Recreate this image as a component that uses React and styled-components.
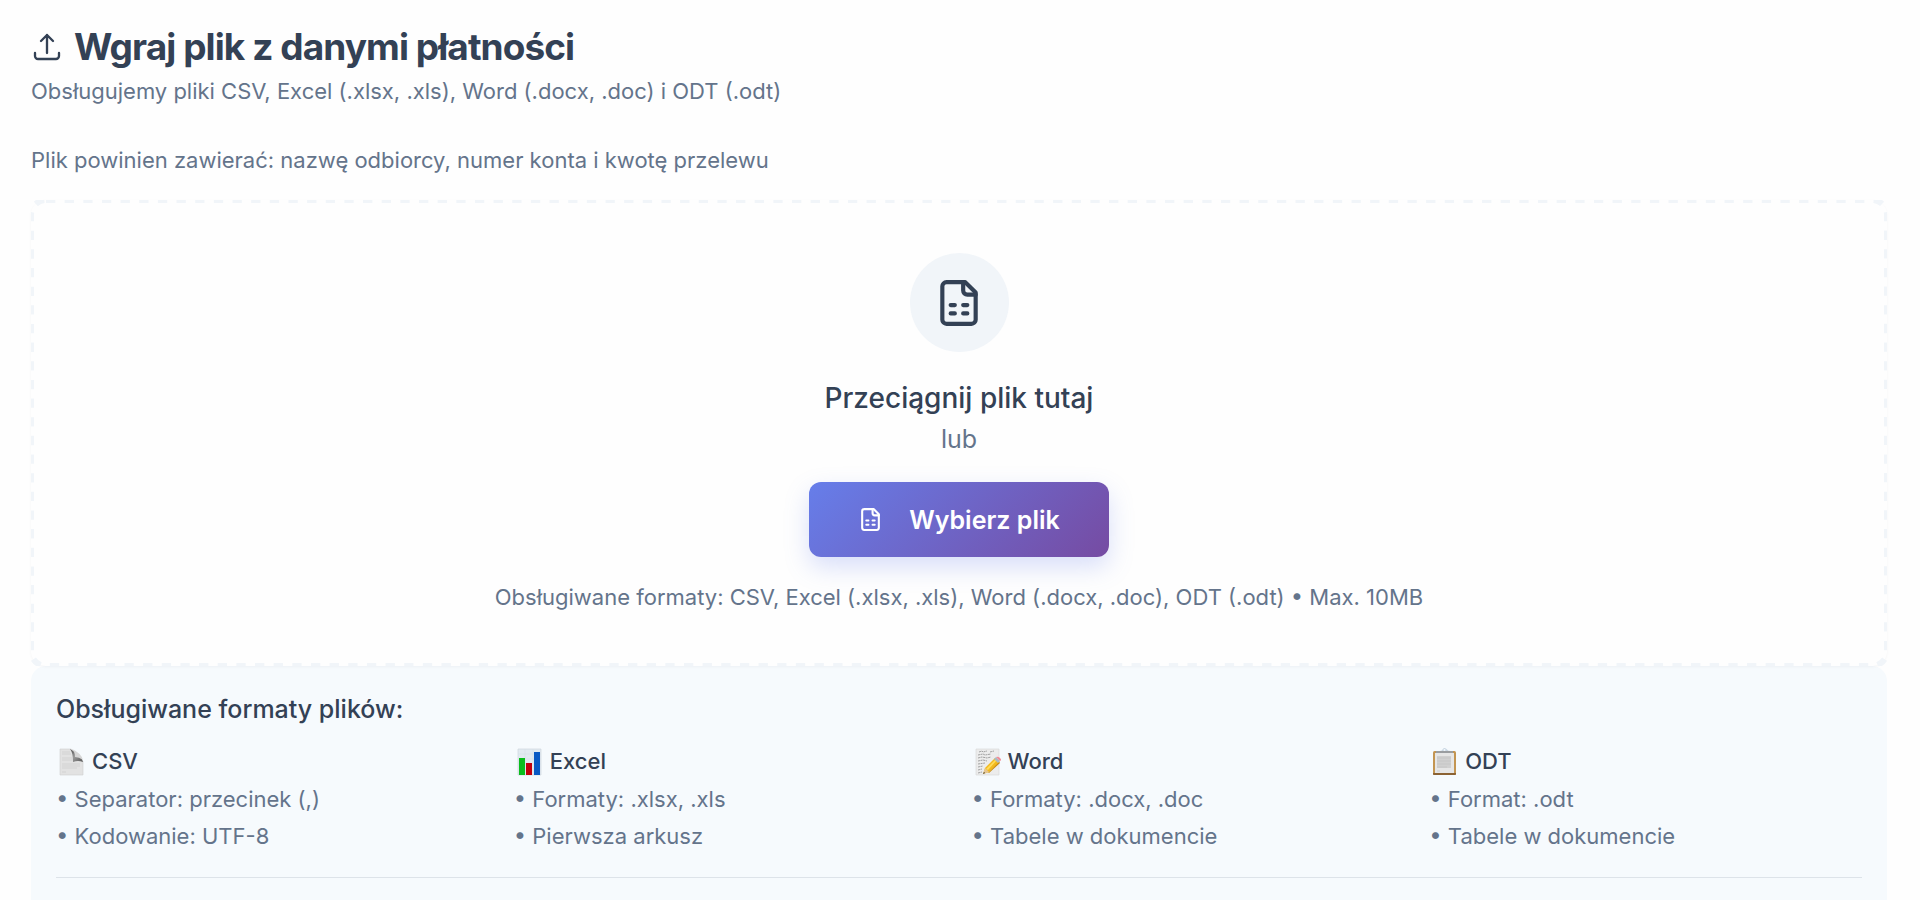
import { useRef } from 'react';
import styled, { createGlobalStyle } from 'styled-components';

const GlobalStyle = createGlobalStyle`
  * {
    box-sizing: border-box;
  }

  body {
    margin: 0;
    background: #fefefe;
    color: #334155;
    font-family: Inter, "Liberation Sans", sans-serif;
    font-size: 22px;
    line-height: 37px;
    overflow-y: hidden;
  }

  h1, h2, h3, p, ul {
    margin: 0;
  }
`;

const Page = styled.main`
  height: 100vh;
  padding: 25px 33px 0 31px;
  overflow: hidden;
`;

const Header = styled.header`
  display: flex;
  flex-direction: column;
  margin-bottom: 21px;
`;

const Title = styled.h1`
  display: flex;
  align-items: center;
  gap: 11px;
  font-size: 37px;
  font-weight: 700;
  line-height: 44px;
  letter-spacing: -0.025em;
`;

const Description = styled.p`
  margin-top: ${p => p.$spaced ? '32px' : '4px'};
  color: #64748b;
`;

const DropZone = styled.section`
  position: relative;
  display: flex;
  flex-direction: column;
  align-items: center;
  padding: 53px 24px 50px;
  border-radius: 15px;
  box-shadow: 0 1px 3px rgba(15, 23, 42, 0.04);
  text-align: center;
`;

const DashedOutline = styled.svg`
  position: absolute;
  inset: 0;
  width: 100%;
  height: 100%;
  pointer-events: none;

  rect {
    fill: none;
    stroke: #f1f5f9;
    stroke-width: 6;
    stroke-dasharray: 9.3 9.35;
  }
`;

const IconCircle = styled.div`
  display: flex;
  align-items: center;
  justify-content: center;
  width: 99px;
  height: 99px;
  margin-bottom: 26px;
  border-radius: 50%;
  background: #f1f5f9;
`;

const DropTitle = styled.h2`
  font-size: 28px;
  font-weight: 500;
  line-height: 40px;
`;

const DropOr = styled.p`
  margin-bottom: 22px;
  color: #64748b;
  font-size: 25px;
  line-height: 42px;
`;

const ChooseButton = styled.button`
  display: inline-flex;
  align-items: center;
  gap: 26px;
  height: 75px;
  padding: 0 49px;
  border: 0;
  border-radius: 12px;
  background: linear-gradient(135deg, #667eea 0%, #764ba2 100%);
  box-shadow: 0 10px 25px rgba(102, 126, 234, 0.25);
  color: #fff;
  font-family: inherit;
  font-size: 25px;
  font-weight: 600;
  cursor: pointer;
`;

const DropHint = styled.p`
  margin-top: 22px;
  color: #64748b;
`;

const Formats = styled.section`
  min-height: 260px;
  padding: 25px;
  border-radius: 15px;
  background: #f6fafd;
`;

const FormatsTitle = styled.h3`
  margin-bottom: 15px;
  font-size: 25px;
  font-weight: 500;
`;

const FormatsGrid = styled.div`
  display: grid;
  grid-template-columns: repeat(4, 1fr);
  gap: 25px;
  padding-bottom: 22px;
  border-bottom: 1px solid #dde3e9;
`;

const FormatName = styled.p`
  display: flex;
  align-items: center;
  gap: 6px;
  margin-bottom: 1px;
  font-weight: 500;
`;

const FormatList = styled.ul`
  padding: 0;
  list-style: none;
  color: #64748b;

  li::before {
    content: '• ';
  }
`;

const UploadIcon = () => (
  <svg width="32" height="32" viewBox="0 0 24 24" fill="none" stroke="currentColor" strokeWidth="1.75" strokeLinecap="round" strokeLinejoin="round" aria-hidden="true">
    <path d="M3 16.5v2.25A2.25 2.25 0 0 0 5.25 21h13.5A2.25 2.25 0 0 0 21 18.75V16.5m-13.5-9L12 3m0 0 4.5 4.5M12 3v13.5" />
  </svg>
);

const SheetIcon = ({ size }) => (
  <svg width={size} height={size} viewBox="0 0 24 24" fill="none" stroke="currentColor" strokeWidth="2" strokeLinecap="round" strokeLinejoin="round" aria-hidden="true">
    <path d="M15 2H6a2 2 0 0 0-2 2v16a2 2 0 0 0 2 2h12a2 2 0 0 0 2-2V7Z" />
    <path d="M14 2v4a2 2 0 0 0 2 2h4" />
    <path d="M8 13h2M14 13h2M8 17h2M14 17h2" />
  </svg>
);

const PageEmoji = () => (
  <svg width="30" height="30" viewBox="0 0 30 30" aria-hidden="true">
    <defs>
      <linearGradient id="curl" x1="0" y1="0" x2="1" y2="1">
        <stop offset="0" stopColor="#444" />
        <stop offset="0.45" stopColor="#999" />
        <stop offset="0.6" stopColor="#888" />
        <stop offset="1" stopColor="#555" />
      </linearGradient>
    </defs>
    <path d="M4 2h11q4 2 5 6t7 6v14H4z" fill="#e2e2e2" stroke="#d0d0d0" strokeWidth="0.6" />
    <path d="M14 2q3 3 3 13 5-2 10 0-1-6-13-13z" fill="url(#curl)" />
    <path d="M16 2q9 4 11 11-4-3-8-3 0-5-3-8z" fill="#d6d6d6" />
    <path d="M6 5h8M6 7h9M6 11h10M6 13h10M6 17h18M6 19h18M6 21h15M6 25h4" stroke="#cbcbcb" strokeWidth="0.7" />
  </svg>
);

const ChartEmoji = () => (
  <svg width="30" height="30" viewBox="0 0 30 30" aria-hidden="true">
    <path d="M4 2h23v26H4z" fill="#e2eaf1" stroke="#ced6dc" strokeWidth="0.7" />
    <path d="M4 7h23M4 12h23M4 17h23M11 2v26M19 2v26" stroke="#d3dde7" strokeWidth="0.5" />
    <path d="M5 11h6v17H5z" fill="#0bbd1d" />
    <path d="M12 16h6v12h-6z" fill="#c3000d" />
    <path d="M20 5h6v23h-6z" fill="#0959c4" />
  </svg>
);

const MemoEmoji = () => (
  <svg width="30" height="30" viewBox="0 0 30 30" aria-hidden="true">
    <path d="M4 2h23v26H4z" fill="#ececec" stroke="#d6d6d6" strokeWidth="0.6" />
    <path d="M7 5l3-1 1 1 4-1M18 5l4-1M6 8l5-1 2 1 6-1M6 11l4-1 5 1 4-1M6 14l5-1 4 1M6 17l7-1M6 20l5-1M6 23l4-1M6 26l4-1" fill="none" stroke="#8d8d8d" strokeWidth="0.8" strokeDasharray="2 0.6" />
    <path d="M11 27l2-6 10-10 5 4-11 10z" fill="#f2b91c" />
    <path d="M14 22l10-10 1 1-9 10z" fill="#ffdc5a" />
    <path d="M16 26l11-11 1 1-11 10z" fill="#c98a0e" />
    <path d="M13 21l4 4-6 2z" fill="#e5c590" />
    <path d="M11 27l1-2 1 1z" fill="#333" />
    <path d="M22 12l2-2 4 4-2 2z" fill="#aab9c2" />
    <path d="M24 10q2-1 4 1t0 3z" fill="#f28b96" />
  </svg>
);

const ClipboardEmoji = () => (
  <svg width="30" height="30" viewBox="0 0 30 30" aria-hidden="true">
    <rect x="4" y="4" width="23" height="24" rx="1.5" fill="#c39552" />
    <path d="M4 26h23v1q0 1-1 1H5q-1 0-1-1z" fill="#8b6233" />
    <path d="M6 6h19v20H6z" fill="#e6e6e6" />
    <path d="M8 9h14v12H8z" fill="#d0d0d0" />
    <path d="M8 11h14M8 14h14M8 17h14M8 20h10M8 24h3" stroke="#c3c3c3" strokeWidth="0.7" />
    <path d="M7 4h17v2H7z" fill="#9a9da0" />
    <path d="M9 4q4 0 4.500-1.500T15.500 1 18 2.500 22 4z" fill="#c8d6e2" />
    <circle cx="15.500" cy="3" r="1" fill="#f6fafd" />
  </svg>
);

const formats = [
  { name: 'CSV', Icon: PageEmoji, items: ['Separator: przecinek (,)', 'Kodowanie: UTF-8'] },
  { name: 'Excel', Icon: ChartEmoji, items: ['Formaty: .xlsx, .xls', 'Pierwsza arkusz'] },
  { name: 'Word', Icon: MemoEmoji, items: ['Formaty: .docx, .doc', 'Tabele w dokumencie'] },
  { name: 'ODT', Icon: ClipboardEmoji, items: ['Format: .odt', 'Tabele w dokumencie'] },
];

export default function App() {
  const fileRef = useRef(null);

  return (
    <>
      <GlobalStyle />
      <Page>
        <Header>
          <Title>
            <UploadIcon />
            Wgraj plik z danymi płatności
          </Title>
          <Description>Obsługujemy pliki CSV, Excel (.xlsx, .xls), Word (.docx, .doc) i ODT (.odt)</Description>
          <Description $spaced>Plik powinien zawierać: nazwę odbiorcy, numer konta i kwotę przelewu</Description>
        </Header>

        <DropZone>
          <DashedOutline aria-hidden="true">
            <rect width="100%" height="100%" rx="15" />
          </DashedOutline>
          <IconCircle>
            <SheetIcon size={50} />
          </IconCircle>
          <DropTitle>Przeciągnij plik tutaj</DropTitle>
          <DropOr>lub</DropOr>
          <input ref={fileRef} type="file" accept=".csv,.xlsx,.xls,.docx,.doc,.odt" aria-label="Wybierz plik" hidden />
          <ChooseButton type="button" onClick={() => fileRef.current.click()}>
            <SheetIcon size={25} />
            Wybierz plik
          </ChooseButton>
          <DropHint>Obsługiwane formaty: CSV, Excel (.xlsx, .xls), Word (.docx, .doc), ODT (.odt) • Max. 10MB</DropHint>
        </DropZone>

        <Formats>
          <FormatsTitle>Obsługiwane formaty plików:</FormatsTitle>
          <FormatsGrid>
            {formats.map(({ name, Icon, items }) => (
              <div key={name}>
                <FormatName>
                  <Icon />
                  {name}
                </FormatName>
                <FormatList>
                  {items.map(item => <li key={item}>{item}</li>)}
                </FormatList>
              </div>
            ))}
          </FormatsGrid>
        </Formats>
      </Page>
    </>
  );
}
